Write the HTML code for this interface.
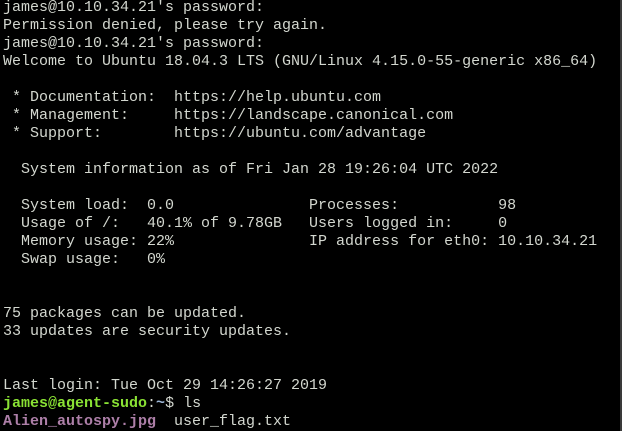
<!DOCTYPE html>
<html><head><meta charset="utf-8"><style>
html,body{margin:0;padding:0;background:#000;width:622px;height:431px;overflow:hidden}
pre{margin:0;padding:0 0 0 3px;position:absolute;top:-1px;left:0;font-family:"Liberation Mono",monospace;font-size:15px;line-height:18px;color:#d3d7cf;white-space:pre}
.g{color:#8ae234;font-weight:bold}
.b{color:#9fb8d8;font-weight:bold}
.p{color:#ad7fa8;font-weight:bold}
.edge{position:absolute;right:0;top:0;width:2px;height:431px;background:#3a3a3a}
</style></head><body><pre>james@10.10.34.21's password:
Permission denied, please try again.
james@10.10.34.21's password:
Welcome to Ubuntu 18.04.3 LTS (GNU/Linux 4.15.0-55-generic x86_64)

 * Documentation:  https://help.ubuntu.com
 * Management:     https://landscape.canonical.com
 * Support:        https://ubuntu.com/advantage

  System information as of Fri Jan 28 19:26:04 UTC 2022

  System load:  0.0               Processes:           98
  Usage of /:   40.1% of 9.78GB   Users logged in:     0
  Memory usage: 22%               IP address for eth0: 10.10.34.21
  Swap usage:   0%


75 packages can be updated.
33 updates are security updates.


Last login: Tue Oct 29 14:26:27 2019
<span class="g">james@agent-sudo</span>:<span class="b">~</span>$ ls
<span class="p">Alien_autospy.jpg</span>  user_flag.txt</pre><div class="edge"></div></body></html>
